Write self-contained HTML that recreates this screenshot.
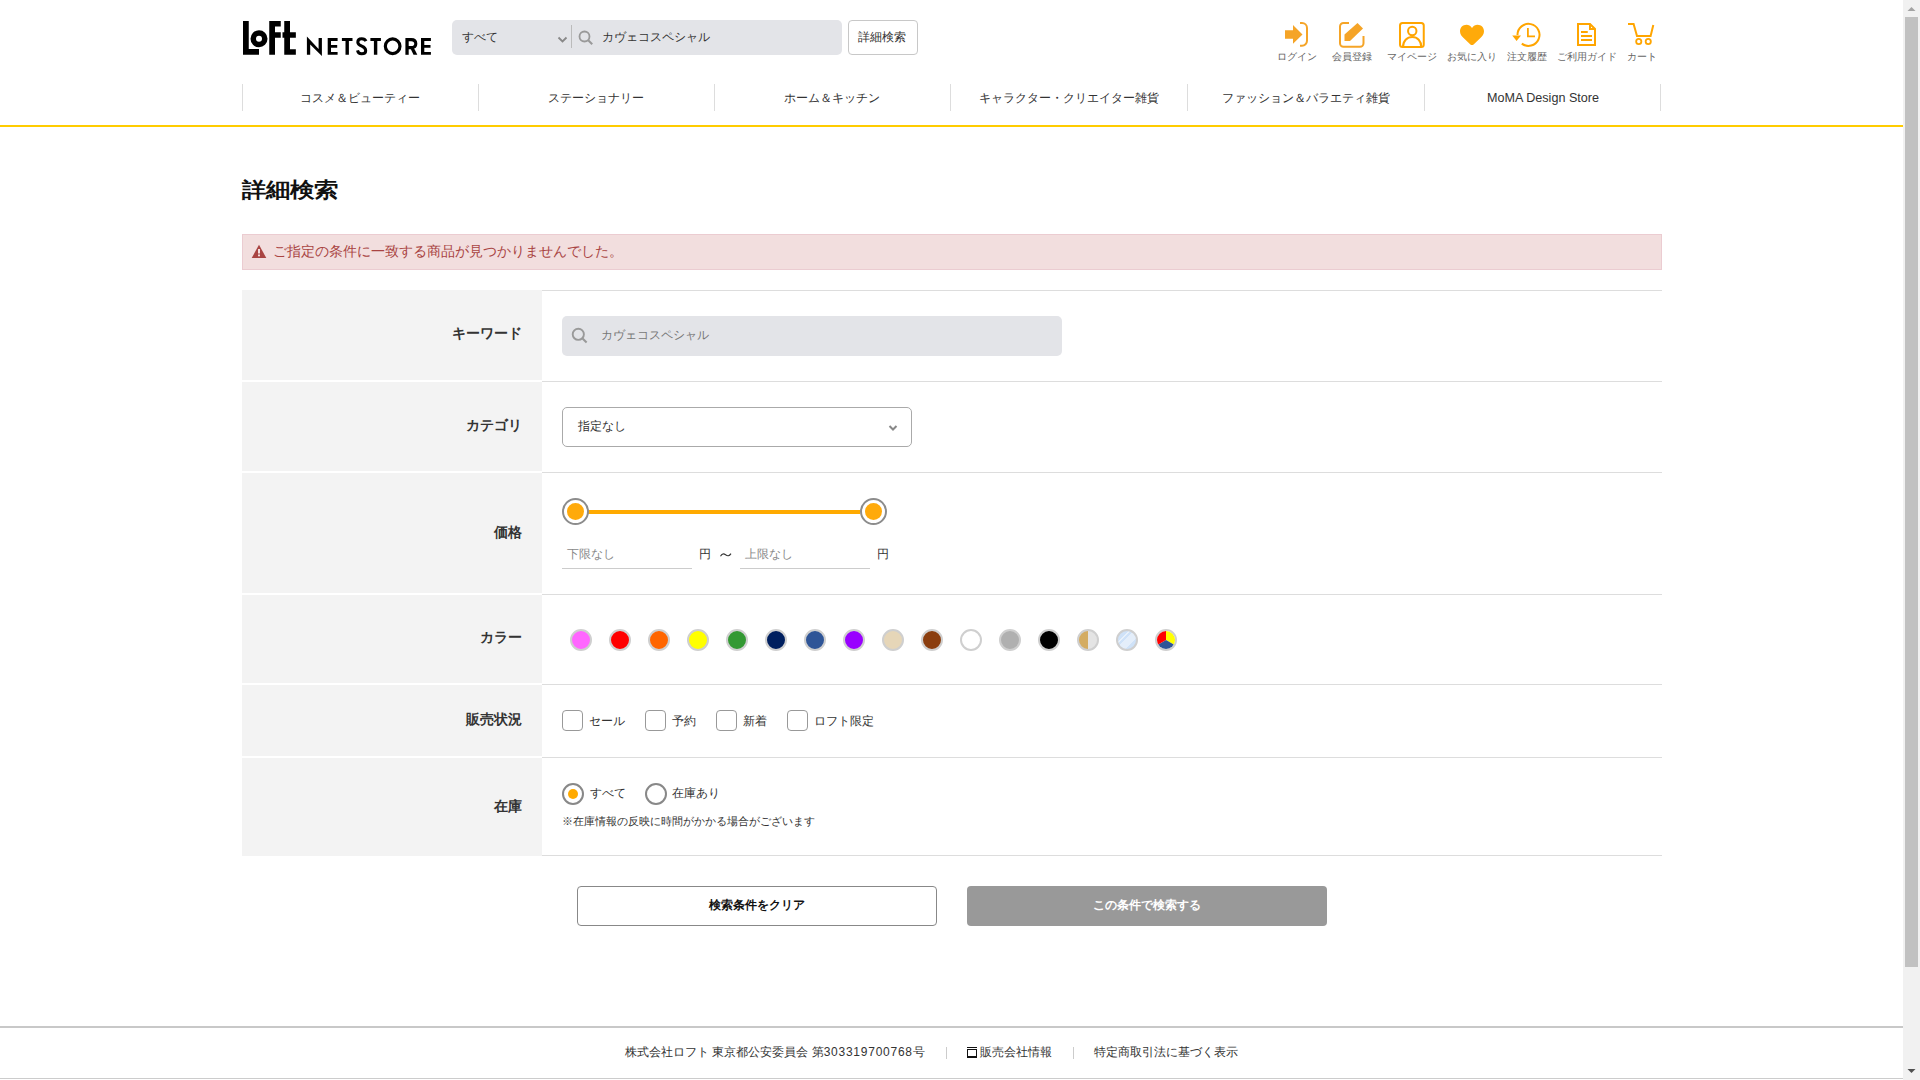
<!DOCTYPE html>
<html lang="ja">
<head>
<meta charset="utf-8">
<title>詳細検索 | ロフト公式通販サイト</title>
<style>
html,body{margin:0;padding:0;background:#fff;overflow:hidden;}
body{width:1920px;height:1080px;position:relative;font-family:"Liberation Sans",sans-serif;color:#333;}
.a{position:absolute;white-space:nowrap;line-height:1;}
.s12{font-size:12px}
.s14{font-size:14px}
.b{font-weight:bold}
.lbl{position:absolute;font-size:10px;line-height:1;color:#666;white-space:nowrap;transform:translateX(-50%);}
.navt{position:absolute;font-size:12px;line-height:1;color:#333;white-space:nowrap;transform:translateX(-50%);top:92px;}
.vd{position:absolute;top:84px;width:1px;height:27px;background:#ddd;}
.th{position:absolute;left:242px;width:300px;background:#f3f3f3;}
.hl{position:absolute;left:542px;width:1120px;height:1px;background:#ddd;}
.tl{position:absolute;font-size:14px;font-weight:bold;line-height:1;color:#333;white-space:nowrap;right:1398px;}
.sw{position:absolute;top:629px;width:18px;height:18px;border:2px solid #cfcfcf;border-radius:50%;box-sizing:content-box;overflow:hidden;}
.cb{position:absolute;top:710px;width:19px;height:19px;border:1px solid #999;border-radius:4px;background:#fff;}
.cbt{position:absolute;top:715px;font-size:12px;line-height:1;color:#333;white-space:nowrap;}
</style>
</head>
<body>

<!-- ===== HEADER ===== -->
<svg class="hdr" width="1920" height="140" style="position:absolute;left:0;top:0">
  <!-- LoFt logo -->
  <g fill="#000">
    <path d="M243 21H248.75V49H259V54.75H243Z"/>
    <circle cx="259" cy="38.75" r="5.75" fill="none" stroke="#000" stroke-width="5.5"/>
    <path d="M269.25 21H280.75V26.5H275V32.25H280.75V37.75H275V54.75H269.25Z"/>
    <path d="M284.25 21H290V32.25H295.85V37.75H290V49.25H295.85V54.75H284.25V37.75H282.5V32.25H284.25Z"/>
    <!-- NETSTORE -->
    <path d="M306.9 54.8V36.4L318.6 49V38H321.9V55.9L310.2 44.6V54.8Z"/>
    <path d="M327.7 38H337.6V40.9H331V44.9H337.2V47.8H331V51.9H337.6V54.8H327.7Z"/>
    <path d="M341.9 38H352.5V41H348.9V54.8H345.5V41H341.9Z"/>
    <path d="M366 41.2C365.2 39.3 363.6 38.7 361.7 38.7C359.3 38.7 357.8 40.2 357.8 42.2C357.8 44.4 359.6 45.3 361.8 46.2C364.2 47.2 365.7 48.4 365.7 50.7C365.7 52.9 363.9 53.8 361.6 53.8C359.4 53.8 358 52.6 357.5 50.4" fill="none" stroke="#000" stroke-width="3"/>
    <path d="M370.4 38H380.9V41H377.3V54.8H373.9V41H370.4Z"/>
    <circle cx="392.65" cy="46.25" r="7.3" fill="none" stroke="#000" stroke-width="3.2"/>
    <path d="M405.4 38H408.7V54.8H405.4Z"/>
    <path d="M407 39.6H411.2C414.3 39.6 415.8 41.4 415.8 43.7C415.8 46 414.3 47.6 411.2 47.6H407" fill="none" stroke="#000" stroke-width="3.1"/>
    <path d="M409.8 47H413.4L417.3 54.8H413.5Z"/>
    <path d="M421 38H430.9V40.9H424.3V44.9H430.5V47.8H424.3V51.9H430.9V54.8H421Z"/>
  </g>

  <!-- login -->
  <g fill="#F5A427">
    <path d="M1285 30.25H1293V25L1302.5 34.5L1293 43.75V38.75H1285Z"/>
  </g>
  <path d="M1300 23H1302A5 5 0 0 1 1307 28V40.75A5 5 0 0 1 1302 45.75H1300" fill="none" stroke="#F5A427" stroke-width="2"/>
  <!-- register -->
  <path d="M1349 23H1343.5A3.5 3.5 0 0 0 1340 26.5V43.25A3.5 3.5 0 0 0 1343.5 46.75H1360A3.5 3.5 0 0 0 1363.5 43.25V36" fill="none" stroke="#F5A427" stroke-width="2"/>
  <path d="M1344.5 34.5L1357.5 23L1363 28.5L1350 41H1344.5Z" fill="#F5A427"/>
  <!-- mypage -->
  <rect x="1400" y="23" width="23.75" height="24" rx="2.5" fill="none" stroke="#FFA500" stroke-width="2"/>
  <circle cx="1412.25" cy="31" r="4.2" fill="none" stroke="#FFA500" stroke-width="2"/>
  <path d="M1403 47C1403 41 1407 37 1412.25 37C1417.5 37 1421.25 41 1421.25 47" fill="none" stroke="#FFA500" stroke-width="2"/>
  <!-- heart -->
  <path d="M1472 28C1470.5 25.6 1468.6 24.75 1466.5 24.75C1462.8 24.75 1460 27.6 1460 31.2C1460 34 1461.5 36 1463.6 38L1470.4 44.4C1471.3 45.3 1472.7 45.3 1473.6 44.4L1480.4 38C1482.5 36 1484 34 1484 31.2C1484 27.6 1481.2 24.75 1477.5 24.75C1475.4 24.75 1473.5 25.6 1472 28Z" fill="#FFAA0A"/>
  <!-- history -->
  <path d="M1517.5 35A11 11 0 1 1 1521.8 43.6" fill="none" stroke="#FFA500" stroke-width="2"/>
  <path d="M1512.25 35.5H1521L1516.6 40.9Z" fill="#FFA500"/>
  <path d="M1527.9 28V36.4H1535" fill="none" stroke="#FFA500" stroke-width="1.8"/>
  <!-- guide -->
  <path d="M1578 24H1590L1595 29V45H1578Z" fill="none" stroke="#FFA500" stroke-width="2"/>
  <path d="M1590 24V29H1595" fill="none" stroke="#FFA500" stroke-width="2"/>
  <rect x="1581" y="31" width="6.75" height="2" fill="#FFA500"/>
  <rect x="1581" y="35" width="11" height="2" fill="#FFA500"/>
  <rect x="1581" y="39" width="11" height="2" fill="#FFA500"/>
  <!-- cart -->
  <path d="M1628 24H1633.6L1637 36H1650.6L1653.3 25" fill="none" stroke="#FFA500" stroke-width="2"/>
  <circle cx="1638.75" cy="41.5" r="2.6" fill="none" stroke="#FFA500" stroke-width="1.8"/>
  <circle cx="1648.25" cy="41.5" r="2.6" fill="none" stroke="#FFA500" stroke-width="1.8"/>
</svg>

<!-- search bar -->
<div style="position:absolute;left:452px;top:20px;width:390px;height:35px;background:#e3e4e8;border-radius:5px;"></div>
<div class="a s12" style="left:462px;top:31px;color:#333;">すべて</div>
<svg width="12" height="8" style="position:absolute;left:557px;top:36px"><path d="M1.5 1.5L5.5 5.5L9.5 1.5" fill="none" stroke="#888" stroke-width="1.8"/></svg>
<div style="position:absolute;left:571px;top:25px;width:1px;height:23px;background:#bbb;"></div>
<svg width="16" height="16" style="position:absolute;left:578px;top:30px"><circle cx="6.5" cy="6.5" r="5" fill="none" stroke="#999" stroke-width="1.8"/><path d="M10.2 10.2L14.2 14.2" stroke="#999" stroke-width="2"/></svg>
<div class="a s12" style="left:602px;top:31px;color:#333;">カヴェコスペシャル</div>
<div style="position:absolute;left:848px;top:20px;width:68px;height:33px;border:1px solid #c8c8c8;border-radius:4px;background:#fff;"></div>
<div class="a s12" style="left:858px;top:31px;color:#333;">詳細検索</div>

<!-- icon labels -->
<div class="lbl" style="left:1296.5px;top:52px">ログイン</div>
<div class="lbl" style="left:1351.75px;top:52px">会員登録</div>
<div class="lbl" style="left:1411.75px;top:52px">マイページ</div>
<div class="lbl" style="left:1471.5px;top:52px">お気に入り</div>
<div class="lbl" style="left:1526.5px;top:52px">注文履歴</div>
<div class="lbl" style="left:1586.5px;top:52px">ご利用ガイド</div>
<div class="lbl" style="left:1641.5px;top:52px">カート</div>

<!-- nav -->
<div class="vd" style="left:242px"></div>
<div class="vd" style="left:478px"></div>
<div class="vd" style="left:714px"></div>
<div class="vd" style="left:950px"></div>
<div class="vd" style="left:1187px"></div>
<div class="vd" style="left:1424px"></div>
<div class="vd" style="left:1660px"></div>
<div class="navt" style="left:360px">コスメ＆ビューティー</div>
<div class="navt" style="left:596px">ステーショナリー</div>
<div class="navt" style="left:832px">ホーム＆キッチン</div>
<div class="navt" style="left:1069px">キャラクター・クリエイター雑貨</div>
<div class="navt" style="left:1306px">ファッション＆バラエティ雑貨</div>
<div class="navt" style="left:1543px;font-size:12.6px">MoMA Design Store</div>
<div style="position:absolute;left:0;top:125px;width:1903px;height:2px;background:#ffcc00;"></div>

<!-- ===== MAIN ===== -->
<div class="a b" style="left:242px;top:179.5px;font-size:24px;color:#111;transform:scaleY(0.86);transform-origin:0 0;">詳細検索</div>

<div style="position:absolute;left:242px;top:234px;width:1418px;height:34px;border:1px solid #ebccd1;background:#f2dede;"></div>
<svg width="16" height="15" style="position:absolute;left:251px;top:244px"><path d="M8 0.8L15.3 14H0.7Z" fill="#a94442"/><rect x="7" y="5" width="2" height="4.5" fill="#f2dede"/><rect x="7" y="10.5" width="2" height="1.8" fill="#f2dede"/></svg>
<div class="a s14" style="left:273px;top:244px;color:#a94442;">ご指定の条件に一致する商品が見つかりませんでした。</div>

<!-- table backgrounds -->
<div class="th" style="top:290px;height:90px"></div>
<div class="th" style="top:382px;height:89px"></div>
<div class="th" style="top:473px;height:120px"></div>
<div class="th" style="top:595px;height:88px"></div>
<div class="th" style="top:685px;height:71px"></div>
<div class="th" style="top:758px;height:98px"></div>
<div class="hl" style="top:290px"></div>
<div class="hl" style="top:381px"></div>
<div class="hl" style="top:472px"></div>
<div class="hl" style="top:594px"></div>
<div class="hl" style="top:684px"></div>
<div class="hl" style="top:757px"></div>
<div class="hl" style="top:855px"></div>

<!-- labels -->
<div class="tl" style="top:326px">キーワード</div>
<div class="tl" style="top:418px">カテゴリ</div>
<div class="tl" style="top:525px">価格</div>
<div class="tl" style="top:630px">カラー</div>
<div class="tl" style="top:712px">販売状況</div>
<div class="tl" style="top:799px">在庫</div>

<!-- keyword -->
<div style="position:absolute;left:562px;top:316px;width:500px;height:40px;background:#e3e4e8;border-radius:5px;"></div>
<svg width="18" height="18" style="position:absolute;left:571px;top:327px"><circle cx="7.3" cy="7.3" r="5.6" fill="none" stroke="#999" stroke-width="1.9"/><path d="M11.3 11.3L15.6 15.6" stroke="#999" stroke-width="2.1"/></svg>
<div class="a s12" style="left:601px;top:329px;color:#777;">カヴェコスペシャル</div>

<!-- category -->
<div style="position:absolute;left:562px;top:407px;width:348px;height:38px;border:1px solid #aaa;border-radius:5px;background:#fff;"></div>
<div class="a s12" style="left:578px;top:420px;color:#333;">指定なし</div>
<svg width="12" height="8" style="position:absolute;left:887px;top:424px"><path d="M2.5 2L6 5.5L9.5 2" fill="none" stroke="#888" stroke-width="2"/></svg>

<!-- price -->
<div style="position:absolute;left:588px;top:510px;width:272px;height:4px;background:#ffaa00;"></div>
<div style="position:absolute;left:562px;top:498px;width:23px;height:23px;border:2px solid #8c8c8c;border-radius:50%;background:#fff;"></div>
<div style="position:absolute;left:567px;top:503px;width:17px;height:17px;border-radius:50%;background:#ffaa0b;"></div>
<div style="position:absolute;left:860px;top:498px;width:23px;height:23px;border:2px solid #8c8c8c;border-radius:50%;background:#fff;"></div>
<div style="position:absolute;left:865px;top:503px;width:17px;height:17px;border-radius:50%;background:#ffaa0b;"></div>
<div class="a s12" style="left:567px;top:548px;color:#888;">下限なし</div>
<div style="position:absolute;left:562px;top:568px;width:130px;height:1px;background:#ccc;"></div>
<div class="a s12" style="left:699px;top:548px;color:#333;">円</div>
<svg width="14" height="8" style="position:absolute;left:719px;top:551px"><path d="M1.5 5.2C3 2.6 4.6 2.2 6.6 3.8C8.6 5.4 10.2 5.2 12 2.6" fill="none" stroke="#333" stroke-width="1.1"/></svg>
<div class="a s12" style="left:745px;top:548px;color:#888;">上限なし</div>
<div style="position:absolute;left:740px;top:568px;width:130px;height:1px;background:#ccc;"></div>
<div class="a s12" style="left:877px;top:548px;color:#333;">円</div>

<!-- colors -->
<div class="sw" style="left:570px;background:#ff66ff"></div>
<div class="sw" style="left:609px;background:#ff0000"></div>
<div class="sw" style="left:648px;background:#ff6600"></div>
<div class="sw" style="left:687px;background:#ffff00"></div>
<div class="sw" style="left:726px;background:#339933"></div>
<div class="sw" style="left:765px;background:#001f5f"></div>
<div class="sw" style="left:804px;background:#2f5597"></div>
<div class="sw" style="left:843px;background:#9900ff"></div>
<div class="sw" style="left:882px;background:#e6d6b8"></div>
<div class="sw" style="left:921px;background:#8b3e0f"></div>
<div class="sw" style="left:960px;background:#ffffff"></div>
<div class="sw" style="left:999px;background:#b0b0b0"></div>
<div class="sw" style="left:1038px;background:#000000"></div>
<div class="sw" style="left:1077px;background:linear-gradient(90deg,#d4ac62 0,#d4ac62 50%,#e4e4e4 50%,#e4e4e4 100%)"></div>
<div class="sw" style="left:1116px;background:linear-gradient(135deg,#cfe2f8 0,#cfe2f8 30%,#e8f1fb 30%,#e8f1fb 36%,#cfe2f8 36%,#cfe2f8 42%,#e4eefa 42%,#e4eefa 72%,#cfe2f8 72%)"></div>
<div class="sw" style="left:1155px;background:#fff"><svg width="18" height="18" style="display:block"><path d="M9 9L9 -1A10 10 0 0 1 17.66 14Z" fill="#ffff00"/><path d="M9 9L17.66 14A10 10 0 0 1 0.34 14Z" fill="#2f5597"/><path d="M9 9L0.34 14A10 10 0 0 1 9 -1Z" fill="#ff0000"/></svg></div>

<!-- sales status -->
<div class="cb" style="left:562px"></div>
<div class="cbt" style="left:589px">セール</div>
<div class="cb" style="left:645px"></div>
<div class="cbt" style="left:672px">予約</div>
<div class="cb" style="left:716px"></div>
<div class="cbt" style="left:743px">新着</div>
<div class="cb" style="left:787px"></div>
<div class="cbt" style="left:814px">ロフト限定</div>

<!-- stock -->
<div style="position:absolute;left:562px;top:783px;width:18px;height:18px;border:2px solid #888;border-radius:50%;background:#fff;"></div>
<div style="position:absolute;left:568px;top:789px;width:10px;height:10px;border-radius:50%;background:#ffaa00;"></div>
<div class="a s12" style="left:590px;top:787px;color:#333;">すべて</div>
<div style="position:absolute;left:645px;top:783px;width:18px;height:18px;border:2px solid #888;border-radius:50%;background:#fff;"></div>
<div class="a s12" style="left:672px;top:787px;color:#333;">在庫あり</div>
<div class="a" style="left:562px;top:816px;font-size:11px;color:#333;">※在庫情報の反映に時間がかかる場合がございます</div>

<!-- buttons -->
<div style="position:absolute;left:577px;top:886px;width:358px;height:38px;border:1px solid #888;border-radius:4px;background:#fff;"></div>
<div class="a s12 b" style="left:757px;top:899px;transform:translateX(-50%);color:#111;">検索条件をクリア</div>
<div style="position:absolute;left:967px;top:886px;width:360px;height:40px;border-radius:4px;background:#999;"></div>
<div class="a s12 b" style="left:1147px;top:899px;transform:translateX(-50%);color:#fff;">この条件で検索する</div>

<!-- ===== FOOTER ===== -->
<div style="position:absolute;left:0;top:1026px;width:1903px;height:2px;background:#c8c8c8;"></div>
<div class="a s12" style="left:625px;top:1046px;color:#333;">株式会社ロフト 東京都公安委員会 第<span style="letter-spacing:0.75px">303319700768</span>号</div>
<div style="position:absolute;left:946px;top:1047px;width:1px;height:12px;background:#ccc;"></div>
<div style="position:absolute;left:967px;top:1047px;width:10px;height:1px;background:#111;"></div><div style="position:absolute;left:967px;top:1049px;width:8px;height:6px;border:1px solid #111;border-bottom-width:2px;"></div>
<div class="a s12" style="left:980px;top:1046px;color:#333;">販売会社情報</div>
<div style="position:absolute;left:1073px;top:1047px;width:1px;height:12px;background:#ccc;"></div>
<div class="a s12" style="left:1094px;top:1046px;color:#333;">特定商取引法に基づく表示</div>
<div style="position:absolute;left:0;top:1078px;width:1903px;height:1px;background:#ccc;"></div>

<!-- ===== SCROLLBAR ===== -->
<div style="position:absolute;left:1903px;top:0;width:17px;height:1080px;background:#f1f1f1;"></div>
<div style="position:absolute;left:1905px;top:17px;width:13px;height:950px;background:#c1c1c1;"></div>
<svg width="17" height="17" style="position:absolute;left:1903px;top:0"><path d="M4.5 11H12.5L8.5 7Z" fill="#a3a3a3"/></svg>
<svg width="17" height="17" style="position:absolute;left:1903px;top:1063px"><path d="M4.5 6H12.5L8.5 10Z" fill="#505050"/></svg>

</body>
</html>
